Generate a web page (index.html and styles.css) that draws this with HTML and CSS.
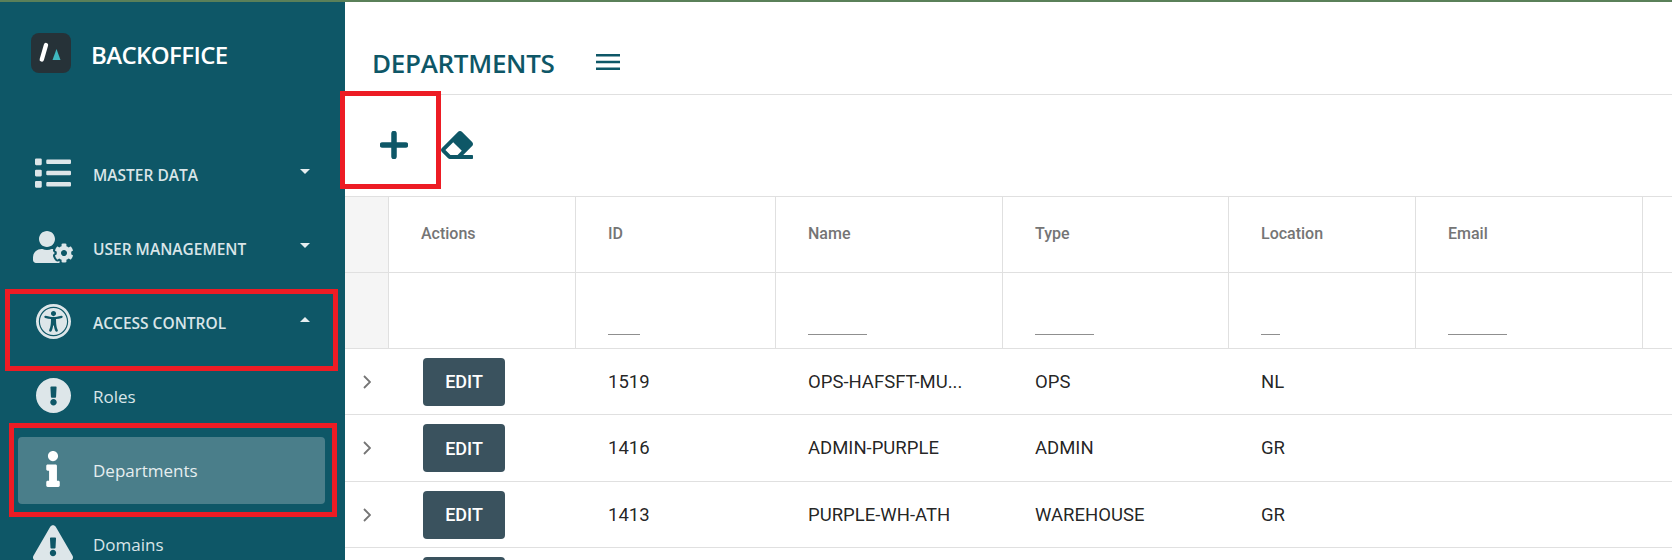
FILE: index.html
```html
<!DOCTYPE html>
<html lang="en">
<head>
<meta charset="utf-8">
<title>Departments</title>
<link rel="stylesheet" href="styles.css">
</head>
<body>
<div class="topline"></div>
<div class="page">
  <aside class="sidebar">
    <div class="brand">
      <div class="logo">
        <svg viewBox="0 0 40 40" width="40" height="40"><path class="logo-slash" d="M15 12 L10.8 26.5"/><path class="logo-tri" d="M25.5 16 L29.5 27 H21.5 Z"/></svg>
      </div>
      <span class="brand-name">BACKOFFICE</span>
    </div>
    <nav class="menu">
      <div class="item group">
        <span class="ico"><svg class="i-list" viewBox="0 0 512 512"><path d="M80 368H16a16 16 0 0 0-16 16v64a16 16 0 0 0 16 16h64a16 16 0 0 0 16-16v-64a16 16 0 0 0-16-16zm0-320H16A16 16 0 0 0 0 64v64a16 16 0 0 0 16 16h64a16 16 0 0 0 16-16V64a16 16 0 0 0-16-16zm0 160H16a16 16 0 0 0-16 16v64a16 16 0 0 0 16 16h64a16 16 0 0 0 16-16v-64a16 16 0 0 0-16-16zm416 176H176a16 16 0 0 0-16 16v32a16 16 0 0 0 16 16h320a16 16 0 0 0 16-16v-32a16 16 0 0 0-16-16zm0-320H176a16 16 0 0 0-16 16v32a16 16 0 0 0 16 16h320a16 16 0 0 0 16-16V80a16 16 0 0 0-16-16zm0 160H176a16 16 0 0 0-16 16v32a16 16 0 0 0 16 16h320a16 16 0 0 0 16-16v-32a16 16 0 0 0-16-16z"/></svg></span>
        <span class="label">MASTER DATA</span><span class="caret down"></span>
      </div>
      <div class="item group">
        <span class="ico"><svg class="i-user" viewBox="0 0 640 512"><path d="M610.5 373.3c2.6-14.1 2.6-28.5 0-42.6l25.8-14.9c3-1.7 4.3-5.2 3.3-8.5-6.7-21.6-18.2-41.2-33.2-57.4-2.3-2.5-6-3.1-9-1.4l-25.8 14.9c-10.9-9.3-23.4-16.5-36.9-21.3v-29.8c0-3.4-2.4-6.4-5.7-7.1-22.3-5-45-4.8-66.2 0-3.3.7-5.7 3.7-5.7 7.1v29.8c-13.5 4.8-26 12-36.9 21.3l-25.8-14.9c-2.9-1.7-6.7-1.1-9 1.4-15 16.2-26.5 35.8-33.2 57.4-1 3.3.4 6.8 3.3 8.5l25.8 14.9c-2.6 14.1-2.6 28.5 0 42.6l-25.8 14.9c-3 1.7-4.3 5.2-3.3 8.5 6.7 21.6 18.2 41.1 33.2 57.4 2.3 2.5 6 3.1 9 1.4l25.8-14.9c10.9 9.3 23.4 16.5 36.9 21.3v29.8c0 3.4 2.4 6.4 5.7 7.1 22.3 5 45 4.8 66.2 0 3.3-.7 5.7-3.7 5.7-7.1v-29.8c13.5-4.8 26-12 36.9-21.3l25.8 14.9c2.9 1.7 6.7 1.1 9-1.4 15-16.2 26.5-35.8 33.2-57.4 1-3.3-.4-6.8-3.3-8.5l-25.8-14.9zM496 400.5c-26.8 0-48.5-21.8-48.5-48.5s21.8-48.5 48.5-48.5 48.5 21.8 48.5 48.5-21.7 48.5-48.5 48.5zM224 256c70.7 0 128-57.3 128-128S294.7 0 224 0 96 57.3 96 128s57.3 128 128 128zm201.2 226.5c-2.3-1.2-4.6-2.6-6.8-3.9l-7.9 4.6c-6 3.4-12.8 5.3-19.6 5.3-10.9 0-21.4-4.6-28.9-12.6-18.3-19.8-32.3-43.9-40.2-69.6-5.5-17.7 1.9-36.4 17.9-45.7l7.9-4.6c-.1-2.6-.1-5.2 0-7.8l-7.9-4.6c-16-9.2-23.4-28-17.9-45.7.9-2.9 2.2-5.8 3.2-8.7-3.8-.3-7.5-1.2-11.4-1.2h-16.7c-22.2 10.2-46.9 16-72.9 16s-50.6-5.8-72.9-16h-16.7C60.2 288 0 348.2 0 422.4V464c0 26.5 21.5 48 48 48h352c10.1 0 19.5-3.2 27.2-8.5-1.2-3.8-2-7.7-2-11.8v-9.2z"/></svg></span>
        <span class="label">USER MANAGEMENT</span><span class="caret down"></span>
      </div>
      <div class="item group">
        <span class="ico"><svg class="i-circle" viewBox="8 8 496 496"><path d="M256 48c114.953 0 208 93.029 208 208 0 114.953-93.029 208-208 208-114.953 0-208-93.029-208-208 0-114.953 93.029-208 208-208m0-40C119.033 8 8 119.033 8 256s111.033 248 248 248 248-111.033 248-248S392.967 8 256 8zm0 56C149.961 64 64 149.961 64 256s85.961 192 192 192 192-85.961 192-192S362.039 64 256 64zm0 44c19.882 0 36 16.118 36 36s-16.118 36-36 36-36-16.118-36-36 16.118-36 36-36zm117.741 98.023c-28.712 6.779-55.511 12.748-82.14 15.807.851 101.023 12.306 123.052 25.037 155.621 3.617 9.26-.957 19.698-10.217 23.315-9.261 3.617-19.699-.957-23.316-10.217-8.705-22.308-17.086-40.636-22.261-78.549h-9.686c-5.167 37.851-13.534 56.208-22.262 78.549-3.615 9.255-14.05 13.836-23.315 10.217-9.26-3.617-13.834-14.056-10.217-23.315 12.713-32.541 24.185-54.541 25.037-155.621-26.629-3.058-53.428-9.027-82.141-15.807-8.6-2.031-13.926-10.648-11.895-19.249s10.647-13.926 19.249-11.895c96.686 22.829 124.283 22.783 220.775 0 8.599-2.03 17.218 3.294 19.249 11.895 2.029 8.601-3.297 17.219-11.897 19.249z"/></svg></span>
        <span class="label">ACCESS CONTROL</span><span class="caret up"></span>
      </div>
      <div class="item sub">
        <span class="ico"><svg class="i-circle" viewBox="8 8 496 496"><path d="M504 256c0 136.997-111.043 248-248 248S8 392.997 8 256C8 119.083 119.043 8 256 8s248 111.083 248 248zm-248 50c-25.405 0-46 20.595-46 46s20.595 46 46 46 46-20.595 46-46-20.595-46-46-46zm-43.673-165.346l7.418 136c.347 6.364 5.609 11.346 11.982 11.346h48.546c6.373 0 11.635-4.982 11.982-11.346l7.418-136c.375-6.874-5.098-12.654-11.982-12.654h-63.383c-6.884 0-12.356 5.78-11.981 12.654z"/></svg></span>
        <span class="label">Roles</span>
      </div>
      <div class="item sub active">
        <span class="ico"><svg class="i-info" viewBox="0 0 192 512"><path d="M20 424.229h20V279.771H20c-11.046 0-20-8.954-20-20V212c0-11.046 8.954-20 20-20h112c11.046 0 20 8.954 20 20v212.229h20c11.046 0 20 8.954 20 20V492c0 11.046-8.954 20-20 20H20c-11.046 0-20-8.954-20-20v-47.771c0-11.046 8.954-20 20-20zM96 0C56.235 0 24 32.235 24 72s32.235 72 72 72 72-32.235 72-72S135.764 0 96 0z"/></svg></span>
        <span class="label">Departments</span>
      </div>
      <div class="item sub">
        <span class="ico"><svg class="i-tri" viewBox="0 0 576 512"><path d="M569.517 440.013C587.975 472.007 564.806 512 527.94 512H48.054c-36.937 0-59.999-40.055-41.577-71.987L246.423 23.985c18.467-32.009 64.72-31.951 83.154 0l239.94 416.028zM288 354c-25.405 0-46 20.595-46 46s20.595 46 46 46 46-20.595 46-46-20.595-46-46-46zm-43.673-165.346l7.418 136c.347 6.364 5.609 11.346 11.982 11.346h48.546c6.373 0 11.635-4.982 11.982-11.346l7.418-136c.375-6.874-5.098-12.654-11.982-12.654h-63.383c-6.884 0-12.356 5.78-11.981 12.654z"/></svg></span>
        <span class="label">Domains</span>
      </div>
    </nav>
  </aside>
  <main class="main">
    <header class="head">
      <h1 class="title">DEPARTMENTS</h1>
      <svg class="burger" viewBox="0 0 24 16" width="24" height="16"><path d="M0 0h24v2.4H0zM0 6.8h24v2.4H0zM0 13.6h24V16H0z"/></svg>
    </header>
    <div class="toolbar">
      <svg class="plus" viewBox="0 0 28 28" width="28" height="28"><path d="M14 2.5v23M2.5 14h23"/></svg>
      <svg class="eraser" viewBox="0 32 512 448" width="32" height="28"><path d="M497.941 273.941c18.745-18.745 18.745-49.137 0-67.882l-160-160c-18.745-18.745-49.136-18.746-67.883 0l-256 256c-18.745 18.745-18.745 49.137 0 67.882l96 96A48.004 48.004 0 0 0 144 480h356c6.627 0 12-5.373 12-12v-40c0-6.627-5.373-12-12-12H355.883l142.058-142.059zm-302.627-62.627l137.373 137.373L265.373 416H150.628l-80-80 124.686-124.686z"/></svg>
    </div>
    <table class="grid">
      <colgroup>
        <col class="c-exp"><col class="c-act"><col class="c-id"><col class="c-name"><col class="c-type"><col class="c-loc"><col class="c-mail"><col class="c-rest">
      </colgroup>
      <thead>
        <tr class="hrow">
          <th class="exp"></th><th>Actions</th><th>ID</th><th>Name</th><th>Type</th><th>Location</th><th>Email</th><th></th>
        </tr>
        <tr class="frow">
          <td class="exp"></td><td></td>
          <td><span class="field w-id"></span></td>
          <td><span class="field w-long"></span></td>
          <td><span class="field w-long"></span></td>
          <td><span class="field w-loc"></span></td>
          <td><span class="field w-long"></span></td>
          <td></td>
        </tr>
      </thead>
      <tbody>
        <tr class="row">
          <td class="chev"><svg viewBox="0 0 8 14" width="8" height="14"><path d="M1 1l6 6-6 6"/></svg></td>
          <td class="act"><button class="edit">EDIT</button></td><td>1519</td><td>OPS-HAFSFT-MU...</td><td>OPS</td><td>NL</td><td></td><td></td>
        </tr>
        <tr class="row">
          <td class="chev"><svg viewBox="0 0 8 14" width="8" height="14"><path d="M1 1l6 6-6 6"/></svg></td>
          <td class="act"><button class="edit">EDIT</button></td><td>1416</td><td>ADMIN-PURPLE</td><td>ADMIN</td><td>GR</td><td></td><td></td>
        </tr>
        <tr class="row">
          <td class="chev"><svg viewBox="0 0 8 14" width="8" height="14"><path d="M1 1l6 6-6 6"/></svg></td>
          <td class="act"><button class="edit">EDIT</button></td><td>1413</td><td>PURPLE-WH-ATH</td><td>WAREHOUSE</td><td>GR</td><td></td><td></td>
        </tr>
        <tr class="row">
          <td class="chev"></td>
          <td class="act"><button class="edit" aria-label="Edit"></button></td><td></td><td></td><td></td><td></td><td></td><td></td>
        </tr>
      </tbody>
    </table>
  </main>
</div>
<div class="mark mark-plus"></div>
<div class="mark mark-access"></div>
<div class="mark mark-dept"></div>
</body>
</html>
```
FILE: styles.css
```css
* { box-sizing: border-box; }
html, body { margin: 0; height: 100%; }
body {
  position: relative;
  height: 560px;
  overflow: hidden;
  background: #fff;
  font-family: "Open Sans", "Noto Sans", sans-serif;
}
.topline { height: 2px; background: #5a8059; }
.page { display: flex; height: 558px; overflow: hidden; }

/* sidebar */
.sidebar { flex: 0 0 345px; background: #0e5767; overflow: hidden; }
.brand { display: flex; align-items: center; height: 135.5px; padding: 0 0 33.5px 31px; gap: 20px; }
.logo { width: 40px; height: 40px; border-radius: 8px; background: #263238; }
.logo svg { display: block; }
.logo-slash { stroke: #fff; stroke-width: 4.4; stroke-linecap: round; fill: none; }
.logo-tri { fill: #3fb8c0; }
.brand-name { color: #fff; font-size: 24px; font-weight: 600; letter-spacing: -0.6px; padding-top: 3px; }
.menu { display: flex; flex-direction: column; }
.item {
  display: flex;
  align-items: center;
  flex: 0 0 67px;
  margin: 3.5px 20px 3.5px 18px;
  padding: 0 15px;
  border-radius: 4px;
  color: #d9e5e8;
}
.item.active { background: #4a7e8a; color: #e6eef0; }
.ico { flex: 0 0 40px; height: 40px; margin-right: 20px; display: flex; align-items: center; justify-content: center; margin-top: -3px; }
.ico svg { display: block; fill: #dde6e9; }
.active .ico svg { fill: #fff; }
.i-list { width: 36px; height: 36px; }
.i-user { width: 40px; height: 32px; }
.i-circle { width: 35px; height: 35px; }
.i-info { width: 14px; height: 36px; }
.i-tri { width: 40px; height: 36px; }
.label { flex: 1; white-space: nowrap; }
.group .label { font-size: 15.5px; font-weight: 600; }
.sub .label { font-size: 17px; font-weight: 400; }
.caret { width: 0; height: 0; margin-top: -6px; border-left: 5px solid transparent; border-right: 5px solid transparent; }
.caret.down { border-top: 5px solid #e6eef0; }
.caret.up { border-bottom: 5px solid #e6eef0; }

/* main */
.main { flex: 1; min-width: 0; }
.head { display: flex; align-items: center; height: 93px; padding: 30px 0 0 27px; gap: 41px; border-bottom: 1px solid #e0e0e0; }
.title { margin: 0; color: #0e5767; font-size: 26px; font-weight: 600; letter-spacing: -0.3px; }
.burger { fill: #0e5767; margin-top: -3px; }
.toolbar { display: flex; align-items: center; height: 100.6px; padding: 0 0 0 35px; gap: 33px; }
.plus { stroke: #0e5767; stroke-width: 5.5; stroke-linecap: round; fill: none; }
.eraser { fill: #0e5767; }

/* table */
.grid {
  width: 100%;
  table-layout: fixed;
  border-collapse: collapse;
  font-family: Roboto, sans-serif;
}
.c-exp { width: 43px; }
.c-act { width: 187px; }
.c-id { width: 200px; }
.c-name { width: 227px; }
.c-type { width: 226px; }
.c-loc { width: 187px; }
.c-mail { width: 227px; }
.grid th, .grid td { padding: 0 0 0 33px; border: 1px solid #e0e0e0; text-align: left; }
.grid tr > :first-child { border-left: 0; }
.grid tr > :last-child { border-right: 0; }
.hrow { height: 76px; }
.grid .hrow th { color: #757575; font-size: 16px; font-weight: 500; padding: 0 0 2px 32.5px; }
.frow { height: 76px; }
.grid .frow td { vertical-align: bottom; padding: 0 0 13px 32px; }
.grid .exp { background: #f5f5f5; padding: 0; }
.field { display: block; height: 1px; background: #8f8f8f; }
.w-id { width: 32px; }
.w-long { width: 59px; }
.w-loc { width: 19px; }
.row { height: 66.5px; }
.row td { color: rgba(0,0,0,.87); font-size: 18.5px; border-left: 0; border-right: 0; white-space: nowrap; padding-top: 1px; }
.grid .chev { padding: 1px 0 0 18px; }
.chev svg { display: block; fill: none; stroke: #757575; stroke-width: 1.8; }
.grid .act { padding-left: 35px; }
.edit {
  display: block;
  width: 82px;
  height: 48px;
  border: 0;
  border-radius: 4px;
  background: #3a525e;
  color: #fff;
  font: 500 18px Roboto, sans-serif;
}

/* red annotation boxes over the screenshot */
.mark { position: absolute; border: 5px solid #ed1c24; }
.mark-plus { left: 340px; top: 91px; width: 101px; height: 98px; }
.mark-access { left: 5px; top: 289px; width: 333px; height: 82px; }
.mark-dept { left: 9px; top: 423px; width: 328px; height: 94px; }
```
